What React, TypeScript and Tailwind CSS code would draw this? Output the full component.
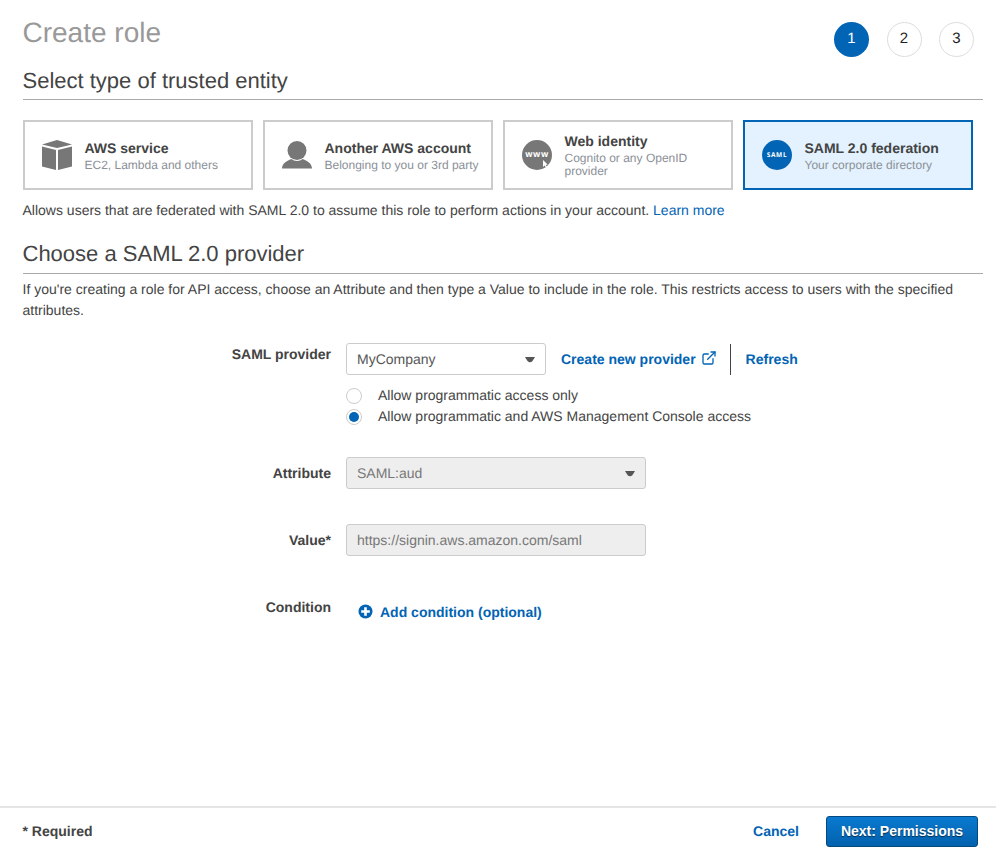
import React from 'react';
import { ExternalLink } from 'lucide-react';

const CubeIcon = () => (
  <svg width="30" height="30" viewBox="0 0 30 30" className="shrink-0">
    <path d="M15 0 L30 4.5 L15 8 L0 4.5 Z" fill="#777" />
    <path d="M0 6.5 L14 10 L14 30 L0 26.5 Z" fill="#777" />
    <path d="M30 6.5 L16 10 L16 30 L30 26.5 Z" fill="#777" />
  </svg>
);

const PersonIcon = () => (
  <svg width="30" height="30" viewBox="0 0 30 30" className="shrink-0">
    <circle cx="15" cy="10.5" r="9.5" fill="#777" />
    <path d="M0 28.5 C0 24 4 21 9.5 19 C12 21.5 18 21.5 20.5 19 C26 21 30 24 30 28.5 Z" fill="#777" />
  </svg>
);

const WwwIcon = () => (
  <svg width="30" height="30" viewBox="0 0 30 30" className="shrink-0">
    <circle cx="15" cy="15" r="15" fill="#777" />
    <text x="15" y="17.2" textAnchor="middle" fontSize="8.5" fontWeight="700" fill="#fff" letterSpacing="0.6" fontFamily="'Open Sans', sans-serif">www</text>
    <path d="M21 20 L21 27 L22.6 25.6 L24 27.6 L25 27 L23.8 25 L25.6 24.6 Z" fill="#fff" />
  </svg>
);

const SamlIcon = () => (
  <svg width="30" height="30" viewBox="0 0 30 30" className="shrink-0">
    <circle cx="15" cy="15" r="15" fill="#0264b5" />
    <text x="15" y="17.4" textAnchor="middle" fontSize="6.5" fontWeight="700" fill="#fff" letterSpacing="0.7" fontFamily="'Open Sans', sans-serif">SAML</text>
  </svg>
);

const Caret = () => (
  <svg width="10" height="6" viewBox="0 0 10 6" className="absolute right-[10px] top-[13px]">
    <path d="M0 0 H10 L7.5 4 Q5 6.5 2.5 4 Z" fill="#555" />
  </svg>
);

const EntityCard = ({ icon, title, sub, active, pad }: { icon: React.ReactNode; title: string; sub: string; active?: boolean; pad?: boolean }) => (
  <div className={`flex items-center gap-[13px] w-[230px] h-[70px] border-2 pl-[17px] ${active ? 'border-[#0264b5] bg-[#e3f2fe]' : 'border-[#cccccc] bg-white'}`}>
    {icon}
    <div className={pad ? 'pb-[1px]' : ''}>
      <div className="text-[14px] leading-[20px] mb-[1px] font-bold text-[#444]">{title}</div>
      <div className="text-[12px] leading-[13px] text-[#8b9097] pr-2">{sub}</div>
    </div>
  </div>
);

const FormRow = ({ label, className, labelClass, children }: { label: string; className?: string; labelClass: string; children: React.ReactNode }) => (
  <div className={`flex ${className ?? ''}`}>
    <div className={`w-[308.5px] text-right font-bold text-[#444] leading-[20px] ${labelClass}`}>{label}</div>
    <div className="ml-[15px] flex-1">{children}</div>
  </div>
);

const Radio = ({ checked, label }: { checked?: boolean; label: string }) => (
  <div className="flex items-center h-[21px]">
    <span className="flex items-center justify-center w-4 h-4 rounded-full border border-[#ccc] bg-white">
      {checked && <span className="block w-[10px] h-[10px] rounded-full bg-[#0264b5]" />}
    </span>
    <span className="ml-4 text-[#444]">{label}</span>
  </div>
);

const Step = ({ n, active }: { n: number; active?: boolean }) => (
  <div className={`flex items-center justify-center w-[35px] h-[35px] rounded-full text-[15px] ${active ? 'bg-[#0264b5] text-white' : 'border border-[#ddd] text-[#222]'}`}>
    {n}
  </div>
);

export default function App() {
  return (
    <div className="relative h-[852px] w-[996px] bg-white text-[14px] text-[#444] font-['Liberation_Sans',Arial,sans-serif] [text-rendering:geometricPrecision] overflow-hidden">
      <div className="pl-[22.5px] pr-[13px]">
        <div className="flex justify-between items-start h-[68px]">
          <h1 className="text-[28px] leading-[32px] text-[#999] pt-[17px] box-content">Create role</h1>
          <div className="flex gap-[17.5px] pt-[22px] pr-[9px]">
            <Step n={1} active />
            <Step n={2} />
            <Step n={3} />
          </div>
        </div>
        <h2 className="text-[22px] leading-[26px] text-[#444] pb-[5px] border-b border-[#aaa]">Select type of trusted entity</h2>

        <div className="flex gap-[10px] mt-5">
          <EntityCard icon={<CubeIcon />} title="AWS service" sub="EC2, Lambda and others" />
          <EntityCard icon={<PersonIcon />} title="Another AWS account" sub="Belonging to you or 3rd party" />
          <EntityCard icon={<WwwIcon />} title="Web identity" sub="Cognito or any OpenID provider" pad />
          <EntityCard icon={<SamlIcon />} title="SAML 2.0 federation" sub="Your corporate directory" active />
        </div>

        <p className="mt-[10px] leading-[20px]">
          Allows users that are federated with SAML 2.0 to assume this role to perform actions in your account.{' '}
          <a className="text-[#0264b5]">Learn more</a>
        </p>

        <h2 className="mt-[21px] text-[22px] leading-[26px] pb-[6px] border-b border-[#aaa]">Choose a SAML 2.0 provider</h2>
        <p className="mt-[5px] leading-[21px]">
          If you're creating a role for API access, choose an Attribute and then type a Value to include in the role. This restricts access to users with the specified attributes.
        </p>

        <FormRow label="SAML provider" labelClass="pt-[1px]" className="mt-[22px]">
          <div className="flex items-center h-[32px]">
            <div className="relative w-[200px] h-[32px] border border-[#ccc] rounded-[3px] pl-[10px] leading-[30px] text-[#555]">
              MyCompany
              <Caret />
            </div>
            <a className="ml-[15px] font-bold text-[#0264b5]">Create new provider</a>
            <ExternalLink size={16} strokeWidth={2} className="ml-[5px] mb-[3px] text-[#0264b5]" />
            <div className="ml-[13px] h-[31px] self-end border-l border-[#444]" />
            <a className="ml-[15px] font-bold text-[#0264b5]">Refresh</a>
          </div>
          <div className="mt-[10px]">
            <Radio label="Allow programmatic access only" />
            <Radio checked label="Allow programmatic and AWS Management Console access" />
          </div>
        </FormRow>

        <FormRow label="Attribute" labelClass="pt-[6px]" className="mt-[30px]">
          <div className="relative w-[300px] h-[32px] border border-[#ccc] rounded-[3px] bg-[#eeeeee] pl-[10px] leading-[30px] text-[#777]">
            SAML:aud
            <Caret />
          </div>
        </FormRow>

        <FormRow label="Value*" labelClass="pt-[6px]" className="mt-[35px]">
          <div className="w-[300px] h-[32px] border border-[#ccc] rounded-[3px] bg-[#eeeeee] pl-[10px] leading-[30px] text-[#777]">
            https://signin.aws.amazon.com/saml
          </div>
        </FormRow>

        <FormRow label="Condition" labelClass="pt-[6px]" className="mt-[35px]">
          <div className="flex items-center h-[20px] mt-[11px] ml-[12px] font-bold text-[#0264b5]">
            <svg width="15" height="15" viewBox="0 0 15 15" className="mb-[2px]">
              <circle cx="7.5" cy="7.5" r="7" fill="#0264b5" />
              <path d="M6.2 3.2 H8.8 V6.2 H11.8 V8.8 H8.8 V11.8 H6.2 V8.8 H3.2 V6.2 H6.2 Z" fill="#fff" />
            </svg>
            <span className="ml-[7px]">Add condition (optional)</span>
          </div>
        </FormRow>
      </div>

      <div className="absolute left-0 right-0 bottom-0 h-[46px] border-t-2 border-[#e5e5e5] flex items-center pt-[2px] pl-[22.5px] pr-[18px]">
        <span className="font-bold text-[#444]">* Required</span>
        <a className="ml-auto font-bold text-[#0264b5]">Cancel</a>
        <button className="ml-[27px] w-[152px] h-[31px] rounded-[3px] border border-[#04497f] bg-gradient-to-b from-[#0a7ad0] to-[#0261ad] text-white font-bold [text-shadow:0_1px_1px_rgba(0,0,0,0.6)]">
          Next: Permissions
        </button>
      </div>
    </div>
  );
}
